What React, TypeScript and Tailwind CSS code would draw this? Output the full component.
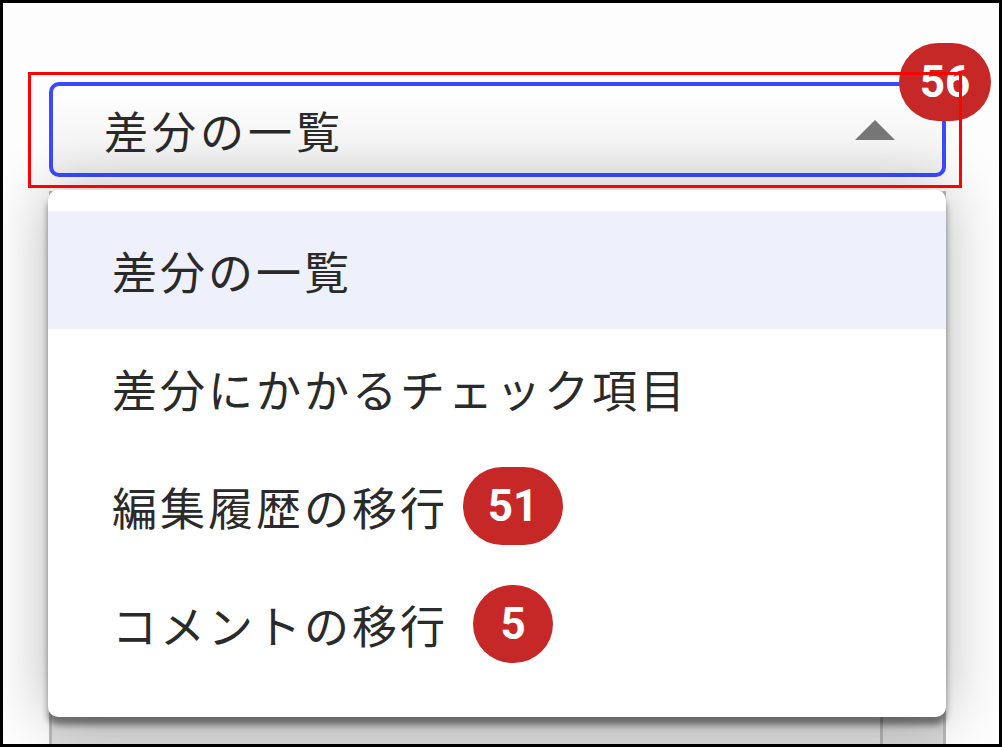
const items = [
  { label: "差分の一覧", active: true },
  { label: "差分にかかるチェック項目" },
  { label: "編集履歴の移行", count: 51 },
  { label: "コメントの移行", count: 5 },
];

function Badge({ n }: { n: number }) {
  return (
    <span className="ml-[15px] flex w-[100px] justify-center">
      <span
        className={
          "inline-flex h-[78px] items-center justify-center rounded-full bg-[#c62828] font-['Roboto',sans-serif] text-[44px] font-bold tracking-normal text-white " +
          (n >= 10 ? "w-[100px]" : "w-[80px]")
        }
      >
        {n}
      </span>
    </span>
  );
}

export default function App() {
  return (
    <div className="relative h-[747px] w-[1002px] overflow-hidden border-[3px] border-black bg-[#fdfdfd] font-['Noto_Sans_CJK_JP','Noto_Sans',sans-serif] text-[#2a2a2a]">
      <div className="pl-[46px] pt-[79px]">
        {/* select */}
        <div className="flex h-[95px] w-[897px] items-center justify-between rounded-[10px] border-4 border-[#3a4aff] bg-gradient-to-b from-white to-[#f1f1f1] pl-[51px] pr-[47px]">
          <span className="text-[44px] leading-none tracking-[4px]">差分の一覧</span>
          <svg width="40" height="20" viewBox="0 0 40 20">
            <path d="M0 20 L20 0 L40 20 Z" fill="#777" />
          </svg>
        </div>

        {/* card underneath the menu */}
        <div className="mt-[14px] flex h-[600px] w-[897px] border-x-[3px] border-[#b8b8b8] bg-[#dcdcdc]">
          <div className="flex-1" />
          <div className="w-[63px] border-l-[3px] border-[#b0b0b0] bg-[#d6d6d6]" />
        </div>
      </div>

      {/* dropdown menu */}
      <div className="absolute left-[45px] top-[187px] h-[527px] w-[898px] rounded-[10px] bg-white pt-[21px] shadow-[0_8px_6px_rgba(0,0,0,0.45),0_0_60px_rgba(0,0,0,0.28)]">
        {items.map((it) => (
          <div
            key={it.label}
            className={
              "flex h-[118px] items-center pl-[64px] text-[45px] leading-none tracking-[3px] " +
              (it.active ? "bg-[#eef0fc]" : "")
            }
          >
            <span>{it.label}</span>
            {it.count !== undefined && <Badge n={it.count} />}
          </div>
        ))}
      </div>

      {/* count badge on the select */}
      <div className="absolute left-[896px] top-[40px] flex h-[78px] w-[92px] items-center justify-center rounded-full bg-[#c62828] font-['Roboto',sans-serif] text-[44px] font-bold text-white">
        56
      </div>

      {/* annotation frame */}
      <div className="absolute left-[25px] top-[69px] h-[116px] w-[934px] border-[3px] border-[#ff0000]" />
    </div>
  );
}
